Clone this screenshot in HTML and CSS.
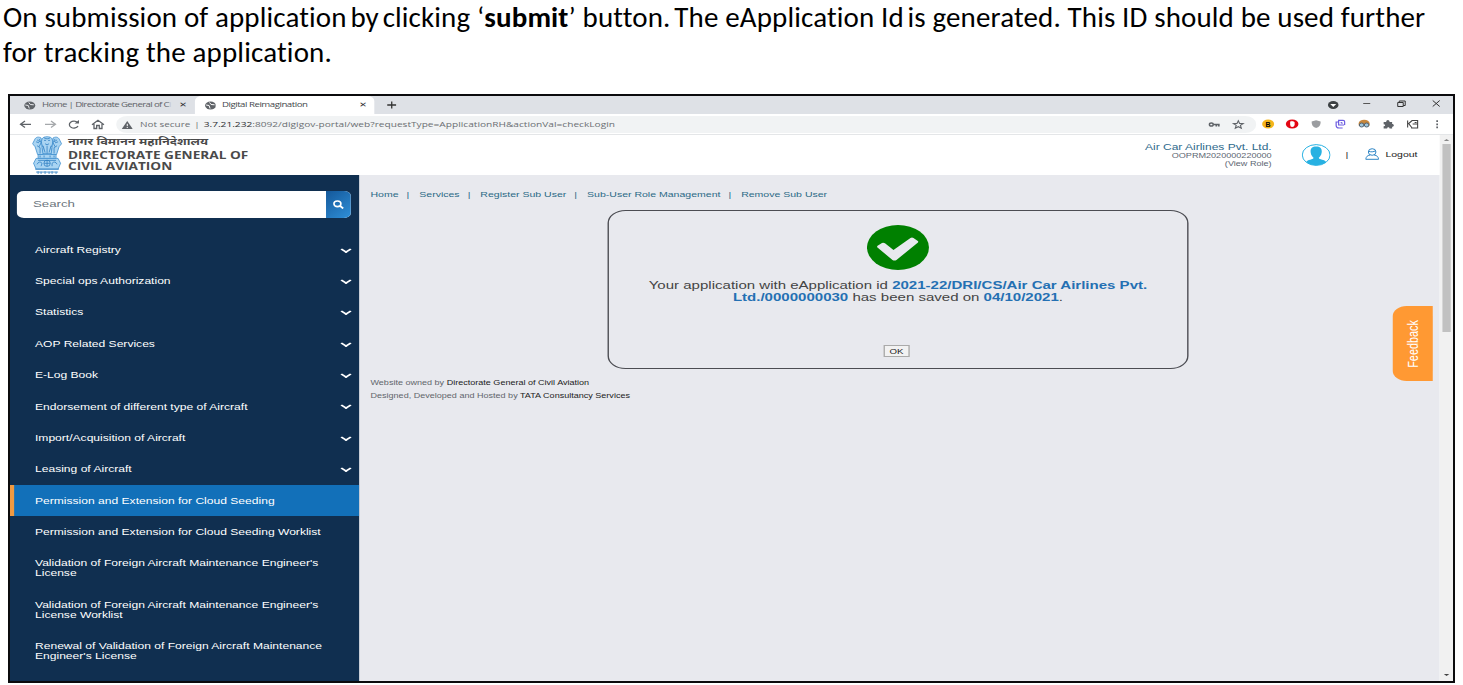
FILE: index.html
```html
<!DOCTYPE html>
<html lang="en">
<head>
<meta charset="utf-8">
<title>Application submission</title>
<link rel="stylesheet" href="styles.css">
</head>
<body>
<div class="caption">
  <p class="line l1">On submission of application<span class="tight"> </span>by<span class="tight"> </span>clicking ‘<b>submit</b>’ button.<span class="tight"> </span>The eApplication Id<span class="tight"> </span>is generated. This ID should be used further</p>
  <p class="line l2">for tracking the application.</p>
</div>
<div class="frame">
<div class="screen">
  <div class="tabs">
    <div class="tab">
      <svg class="globe" viewBox="0 0 12 9" preserveAspectRatio="none"><ellipse cx="6" cy="4.5" rx="5.5" ry="4" fill="#5f6368"/><path d="M1.500 4l3 .5 1 3M5 1.500L6.500 3.500l3.500.3" stroke="#e8eaed" stroke-width="1" fill="none"/></svg>
      <span class="t1">Home | Directorate General of C<em>i</em></span><span class="x">✕</span>
    </div>
    <div class="tab active">
      <svg class="globe" viewBox="0 0 12 9" preserveAspectRatio="none"><ellipse cx="6" cy="4.5" rx="5.5" ry="4" fill="#5f6368"/><path d="M1.500 4l3 .5 1 3M5 1.500L6.500 3.500l3.500.3" stroke="#fff" stroke-width="1" fill="none"/></svg>
      <span class="t2">Digital Reimagination</span><span class="x">✕</span>
    </div>
    <svg class="plus" viewBox="0 0 10 8" preserveAspectRatio="none"><path d="M5 .5v7M.5 4h9" stroke="#333" stroke-width="1.3"/></svg>
    <svg class="winctl" viewBox="0 0 130 18" preserveAspectRatio="none"><ellipse cx="15" cy="9" rx="5.3" ry="4" fill="#3c4043"/><path d="M12 8h6l-3 3z" fill="#fff"/><path d="M45 7.500h7" stroke="#555" stroke-width="1"/><path d="M79.500 6.500h5.500v4h-5.500zM81 6.500V5h6v4.500h-2M114.500 4.500l7 6M121.500 4.500l-7 6" stroke="#333" fill="none"/></svg>
  </div>
  <div class="toolbar">
    <svg class="navicons" viewBox="0 0 106 20" preserveAspectRatio="none"><g fill="none" stroke="#5f6368" stroke-width="1.300"><path d="M21 10.300H11M15 7l-4.500 3.300L15 13.600"/><path stroke="#a5a8ab" d="M35 10.300H45M41 7l4.500 3.300L41 13.600"/><path d="M67.500 8.500A4.500 3.500 0 1 0 68 12"/><path d="M82 10.800l6-4.600 6 4.600M84 10v4.500h2.700v-3h2.600v3H92V10"/></g><path d="M64.500 9.500h4.500V6z" fill="#5f6368"/></svg>
    <div class="address">
      <svg class="warn" viewBox="0 0 11 8" preserveAspectRatio="none"><path d="M5.500 0L11 8H0z" fill="#5f6368"/><path d="M5.500 2.800v2.400M5.500 6v1" stroke="#fff"/></svg>
      <span class="ns">Not secure</span><span class="bar">|</span>
      <span class="url"><b>3.7.21.232</b>:8092/digigov-portal/web?requestType=ApplicationRH&amp;actionVal=checkLogin</span>
      <svg class="pairicons" viewBox="0 0 54 20" preserveAspectRatio="none"><g fill="none" stroke="#5f6368"><ellipse cx="9" cy="9.500" rx="1.900" ry="1.600" stroke-width="1.500"/><path d="M11 9.500h5.500v2M14 9.500v2" stroke-width="1.700"/><path d="M36 5.700l1.300 2.700 3.500.2-2.700 1.800.9 2.800-3-1.500-3 1.500.9-2.800-2.700-1.800 3.500-.2z" stroke-width="1.100"/></g></svg>
    </div>
    <svg class="extensions" viewBox="0 0 197 20" preserveAspectRatio="none">
      <ellipse cx="12" cy="10" rx="6" ry="4.500" fill="#f5b51b"/><text x="9.300" y="12.600" class="bmark">B</text>
      <ellipse cx="36" cy="10" rx="6.300" ry="4.600" fill="#e30613"/><path d="M34 8v2.500q0 2.500 2 2.500t2.500-2V8.500c0-1-1-1-1-.5 0-1.300-1.200-1.300-1.200-.3 0-1.200-1.200-1.200-1.200 0C35 7 34 7 34 8z" fill="#fff"/>
      <path d="M55.500 7.500L60 6.300l4.500 1.200c0 4-1.500 5.500-4.500 6.500-3-1-4.500-2.500-4.500-6.500z" fill="#9b9da0"/>
      <path d="M82 8h-2v3.500q0 2.500 3 2.500h3.500M88 11h-5.500V6.300H87q1.500 0 1.500 1.500V11M84.500 9q1.500-1 1.500.8" fill="none" stroke="#6c5ce0" stroke-width="1.200"/>
      <path d="M102.500 9.500a5.500 3.800 0 0 1 11 0v2h-11z" fill="#c8873c"/><ellipse cx="105.500" cy="11" rx="2.300" ry="2" fill="#9fc6dd" stroke="#50606d"/><ellipse cx="110.500" cy="11" rx="2.300" ry="2" fill="#9fc6dd" stroke="#50606d"/>
      <path d="M127.500 8h2.500c0-2.800 3.500-2.800 3.500 0h2.500v2c2.300 0 2.300 2.800 0 2.800V14.500h-2.600c0-1.700-2.400-1.700-2.400 0h-3.500v-2.300c2 0 2-2 0-2z" fill="#5f6368"/>
      <path d="M151.500 6.500v7M156 6.500l-3.500 3 3.500 4.500M156 6.500h5.500v3.500h-5M161.500 10v4h-6.500M158.500 8.500h2" fill="none" stroke="#444" stroke-width="1.100"/>
      <path d="M181 6.200v1.800M181 9.400v1.800M181 12.500v1.800" stroke="#5f6368" stroke-width="1.700"/>
    </svg>
  </div>
  <div class="page">
    <div class="site">
      <header class="head">
        <svg class="emblem" viewBox="0 0 30 41" preserveAspectRatio="none">
          <g fill="#a9d4f2" stroke="#3f8fcf" stroke-width=".8">
            <path d="M10 4c1-3 9-3 10 0l1 4-2 5 1 6H10l1-6-2-5z"/>
            <path d="M9 3C5 1 3 3 2 6L.5 9 3 12l2.500 8H11l-1-7zM21 3c4-2 6 0 7 3l1.500 3L27 12l-2.500 8H19l1-7z"/>
            <path d="M6 20h18v4H6z"/><path d="M4 24h22l2.500 5-2.500 6H4l-2.500-6z"/>
          </g>
          <g fill="none" stroke="#2f7fc2" stroke-width=".8"><path d="M12 5.500h2M16 5.500h2M13 9q2 2 4 0M11 11l2 7M15 11v8M19 11l-2 7M4 7l3 1M26 7l-3 1M5 11l3 2 0 6M25 11l-3 2v6M3 35h24M5 5l3 2M25 5l-3 2M12 3l3 1 3-1M7 4l2 4-2 4M23 4l-2 4 2 4"/><circle cx="15" cy="29" r="3.200"/><path d="M12 29h6M15 26v6M5 30q2-4 5-1l-1 3M20 32v-3q3-3 5 1M6 26h18M8 21v2M12 21v2M18 21v2M22 21v2"/><path d="M4 38h22M6 37v3M9 37.500v2.500M13 37v3M17 37.500v2.500M20 37v3M24 37.500v2.500"/></g>
        </svg>
        <div class="brand"><div class="hi">नागर विमानन महानिदेशालय</div><div class="en">DIRECTORATE GENERAL OF<br>CIVIL AVIATION</div></div>
        <div class="user"><div class="uname">Air Car Airlines Pvt. Ltd.</div><div>OOPRM2020000220000</div><div>(View Role)</div></div>
        <svg class="avatar" viewBox="0 0 29 22" preserveAspectRatio="none"><ellipse cx="14.500" cy="11" rx="13.900" ry="10.400" fill="#fff" stroke="#27b1e2"/><path d="M14.500 2.500c-4.500 0-6 2.500-5.500 6 .3 3 1.900 4.200 2.900 5.200-.2 2-6.200 1.800-7.400 4.300 5 4.300 15 4.300 20 0-1.200-2.500-7.200-2.300-7.400-4.300 1-1 2.600-2.200 2.900-5.200.5-3.500-1-6-5.500-6z" fill="#27b1e2"/></svg>
        <span class="sep">|</span>
        <svg class="person" viewBox="0 0 14 12" preserveAspectRatio="none"><g fill="none" stroke="#2f86c5"><ellipse cx="7" cy="4" rx="3.800" ry="3.300"/><path d="M3.500 3.200c2 1 5 .8 7-.5M5 7C2 7.500.7 9 .6 11.300h12.800C13.300 9 12 7.500 9 7"/></g></svg>
        <span class="logout">Logout</span>
      </header>
      <div class="body">
        <nav class="side">
          <div class="search"><span>Search</span><i><svg viewBox="0 0 11 9" preserveAspectRatio="none"><ellipse cx="4.500" cy="3.800" rx="3.500" ry="2.800" fill="none" stroke="#fff" stroke-width="1.600"/><path d="M7 5.800l3.300 2.600" stroke="#fff" stroke-width="1.900"/></svg></i></div>
          <ul class="menu">
            <li class="sub">Aircraft Registry</li>
            <li class="sub">Special ops Authorization</li>
            <li class="sub">Statistics</li>
            <li class="sub">AOP Related Services</li>
            <li class="sub">E-Log Book</li>
            <li class="sub">Endorsement of different type of Aircraft</li>
            <li class="sub">Import/Acquisition of Aircraft</li>
            <li class="sub">Leasing of Aircraft</li>
            <li class="on">Permission and Extension for Cloud Seeding</li>
            <li>Permission and Extension for Cloud Seeding Worklist</li>
            <li>Validation of Foreign Aircraft Maintenance Engineer's<br>License</li>
            <li>Validation of Foreign Aircraft Maintenance Engineer's<br>License Worklist</li>
            <li>Renewal of Validation of Foreign Aircraft Maintenance<br>Engineer's License</li>
          </ul>
        </nav>
        <main class="main">
          <div class="crumbs"><a>Home</a><a>Services</a><a>Register Sub User</a><a>Sub-User Role Management</a><a>Remove Sub User</a></div>
          <section class="dialog">
            <svg class="check" viewBox="0 0 62 45" preserveAspectRatio="none"><ellipse cx="31" cy="22.500" rx="31" ry="22.500" fill="#008000"/><path d="M10.500 22.500q-1-1 .5-2l4-2.500q1.500-.8 3 .3l8.500 6.700L43.500 13q1.500-1 3 0l4 2.700q1.500 1 .2 2L29.500 35q-2 1.200-4 0z" fill="#e8e9ee"/></svg>
            <p>Your application with eApplication id <b>2021-22/DRI/CS/Air Car Airlines Pvt.<br>Ltd./0000000030</b> has been saved on <b>04/10/2021</b>.</p>
            <button>OK</button>
          </section>
          <footer>Website owned by <b>Directorate General of Civil Aviation</b><br>Designed, Developed and Hosted by <b>TATA Consultancy Services</b></footer>
          <div class="feedback"><span>Feedback</span></div>
        </main>
      </div>
    </div>
    <div class="scroll"><i class="up"></i><i class="thumb"></i><i class="down"></i></div>
  </div>
</div>
</div>
</body>
</html>
```
FILE: styles.css
```css
:root { --k: 1.38; }
* { box-sizing: border-box; }
body { margin: 0; width: 1463px; height: 685px; overflow: hidden; background: #fff; font-family: "Liberation Sans", Arial, sans-serif; }
svg { display: block; flex: none; }
.caption { height: 94px; padding-left: 3px; color: #000; font: 29px/35px Carlito, "Open Sans", sans-serif; white-space: nowrap; }
.line { margin: 0; width: max-content; }
.l1 { letter-spacing: .13px; }
.l2 { letter-spacing: .16px; }
.tight { letter-spacing: -2.800px; }
.frame { margin-left: 8px; width: 1447px; height: 589px; border: 2px solid #0b0b0d; overflow: hidden; }
.screen { width: calc(1443px / var(--k)); height: 585px; display: flex; flex-direction: column; transform: scaleX(var(--k)); transform-origin: 0 0; white-space: nowrap; }

.tabs { height: 18px; flex: none; background: #dee1e6; display: flex; align-items: center; font: 7px/18px "Open Sans", sans-serif; color: #5f6368; }
.tab { height: 18px; display: flex; align-items: center; padding-left: calc(14px / var(--k)); width: calc(185px / var(--k)); }
.tab.active { background: #fff; width: calc(180px / var(--k)); padding-left: calc(9px / var(--k)); color: #45494d; border-radius: 5px 5px 0 0; }
.globe { width: calc(12px / var(--k)); height: 9px; margin-right: calc(6px / var(--k)); }
.t1 { width: calc(132px / var(--k)); letter-spacing: -.46px; }
.t1 em { font-style: normal; color: #c3c7cc; }
.t2 { width: calc(136px / var(--k)); letter-spacing: -.35px; }
.x { margin-left: calc(5px / var(--k)); color: #333; font: bold 7px/18px "DejaVu Sans", sans-serif; }
.active .x { margin-left: calc(1px / var(--k)); }
.plus { width: calc(10px / var(--k)); height: 8px; margin-left: calc(12px / var(--k)); }
.winctl { width: calc(130px / var(--k)); height: 18px; margin-left: auto; margin-right: calc(5px / var(--k)); }

.toolbar { height: 21px; flex: none; display: flex; background: #fff; border-bottom: 1px solid #e4e6e8; }
.navicons { width: calc(106px / var(--k)); height: 20px; }
.address { width: calc(1140px / var(--k)); height: 17px; margin-top: 2px; border-radius: 8px; background: #f1f3f4; display: flex; align-items: center; font: 7.2px/17px "Open Sans", sans-serif; color: #6b6f73; }
.warn { width: calc(11px / var(--k)); height: 8px; margin: 0 calc(7px / var(--k)) 0 calc(6px / var(--k)); }
.bar { margin: 0 calc(4px / var(--k)); }
.url { font-size: 7.35px; }
.url b { color: #2c2e31; font-weight: 400; }
.pairicons { width: calc(54px / var(--k)); height: 20px; margin-left: auto; }
.extensions { width: calc(197px / var(--k)); height: 20px; }
.bmark { font: bold 7px "Liberation Sans", sans-serif; }

.page { flex: 1; min-height: 0; display: flex; }
.site { flex: 1; min-width: 0; display: flex; flex-direction: column; }
.head { height: 40px; flex: none; background: #fff; display: flex; align-items: flex-start; }
.emblem { width: calc(30px / var(--k)); height: 40px; margin-left: calc(22px / var(--k)); }
.brand { margin-left: calc(6px / var(--k)); color: #4a4a4a; font-weight: 700; }
.hi { font: 700 10px/13px "Noto Sans Devanagari", "Noto Sans", sans-serif; padding-top: 1px; width: max-content; transform: scaleX(.925); transform-origin: 0 0; }
.en { font: 700 9.9px/11px "Open Sans", sans-serif; margin-top: 1px; }
.user { margin-left: auto; padding-top: 7px; text-align: right; font-size: 6.58px; line-height: 8px; color: #5c6672; }
.uname { font-size: 8.7px; line-height: 10px; color: #2e6a8c; }
.avatar { width: calc(29px / var(--k)); height: 22px; margin: 9px 0 0 calc(30px / var(--k)); }
.sep { font-size: 8px; line-height: 39px; color: #333; margin-left: calc(15px / var(--k)); }
.person { width: calc(14px / var(--k)); height: 12px; margin: 13px 0 0 calc(17px / var(--k)); }
.logout { font-size: 7.6px; line-height: 39px; margin: 0 calc(22.500px / var(--k)) 0 calc(6px / var(--k)); color: #222; }

.body { flex: 1; min-height: 0; display: flex; background: #e8e9ee; }
.side { flex: none; width: calc(349px / var(--k)); background: #102f50; color: #fff; overflow: hidden; }
.search { margin: 16px calc(7.500px / var(--k)) 0 calc(6.500px / var(--k)); height: 27px; display: flex; border-radius: 5px; overflow: hidden; background: #fff; color: #6c757d; font-size: 9.6px; line-height: 26px; }
.search span { flex: 1; padding-left: calc(16.500px / var(--k)); }
.search i { width: calc(26px / var(--k)); display: flex; align-items: center; justify-content: center; background: linear-gradient(135deg, #14589a, #2f8fd8); }
.search svg { width: calc(11px / var(--k)); height: 9px; }
.menu { list-style: none; margin: 16px 0 0; padding: 0; font-size: 8.75px; line-height: 10px; }
.menu li { padding: 10.700px 0 10.700px calc(25px / var(--k)); position: relative; }
.menu .on { background: #1270b9; border-left: 3px solid #f09a42; padding-left: calc(25px / var(--k) - 3px); }
.sub::after { content: ""; position: absolute; right: calc(7.500px / var(--k)); top: 11.500px; width: 5px; height: 5px; border: solid #fff; border-width: 0 2px 2px 0; transform: scale(.82, .72) rotate(45deg); }

.main { flex: 1; position: relative; padding-left: calc(11.500px / var(--k)); }
.crumbs { height: 35px; padding-top: 15px; font-size: 7.64px; line-height: 10px; color: #2b6a86; }
.crumbs a + a::before { content: "|"; margin: 0 calc(10px / var(--k)) 0 calc(8px / var(--k)); }
.dialog { width: calc(581px / var(--k)); height: 159px; margin-left: calc(237px / var(--k)); border: 1px solid #4b4c52; border-radius: 13px; display: flex; flex-direction: column; align-items: center; padding-top: 14px; }
.check { width: calc(62px / var(--k)); height: 45px; }
.dialog p { margin: 9px 0 0; font-size: 10.9px; line-height: 12px; text-align: center; color: #444; }
.dialog p b { color: #2470b3; }
.dialog button { margin: 42px calc(3px / var(--k)) 0 0; width: calc(26px / var(--k)); height: 12px; padding: 0; border: 1px solid #aaa; background: #f2f2f2; font: 7px/9px "Liberation Sans", sans-serif; color: #222; }
footer { margin-top: 8px; font-size: 6.55px; line-height: 12.500px; color: #62666c; }
footer b { color: #222; font-weight: 400; }
.feedback { position: absolute; right: calc(7.500px / var(--k)); top: 131px; width: calc(40px / var(--k)); height: 75px; border-radius: 10px 0 0 10px; background: #ff9933; display: flex; align-items: center; justify-content: center; }
.feedback span { writing-mode: vertical-rl; transform: rotate(180deg); color: #fff; font-size: 10.9px; line-height: 12px; }
.scroll { width: calc(13px / var(--k)); background: #f1f1f1; display: flex; flex-direction: column; align-items: center; }
.up, .down { border: 2.500px solid transparent; }
.up { border-bottom-color: #888; border-top: 0; margin: 4px 0 3px; }
.thumb { width: calc(9px / var(--k)); height: 188px; background: #c1c1c1; }
.down { border-top-color: #444; border-bottom: 0; margin: auto 0 5px; }
```
